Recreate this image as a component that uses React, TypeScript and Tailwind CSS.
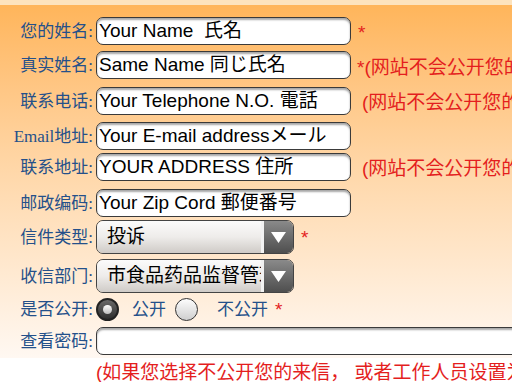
export default function App() {
  const label =
    "w-[96px] shrink-0 pr-[3px] text-right text-[17px] leading-none text-[#24508a] [font-family:'Liberation_Serif','Noto_Sans_CJK_SC',serif]";
  const input =
    "h-[28px] shrink-0 rounded-[7px] border-[1.5px] border-[#3a3a3a] bg-white pl-[2px] text-[19px] leading-[25px] text-black shadow-[inset_0_2px_2px_rgba(0,0,0,0.35)] whitespace-nowrap overflow-hidden";
  const red = "text-[19px] leading-none text-[#e41e1e] whitespace-nowrap";

  return (
    <div className="w-[512px] h-[382px] overflow-hidden bg-white [font-family:'Liberation_Sans','Noto_Sans_CJK_JP',sans-serif]">
      <div className="h-[5px] bg-[#fde3bd]" />
      <div className="h-[353px] bg-gradient-to-b from-[#ffb55a] via-[#ffd6a6] via-45% to-[#fff8f2] pt-[12px]">
        {/* 您的姓名 */}
        <div className="flex items-center h-[28px]">
          <div className={label}>您的姓名:</div>
          <div className={input + " w-[255px]"}>Your Name&nbsp; 氏名</div>
          <span className={red + " ml-[7px] mt-[2px]"}>*</span>
        </div>

        {/* 真实姓名 */}
        <div className="flex items-center h-[28px] mt-[6px]">
          <div className={label}>真实姓名:</div>
          <div className={input + " w-[255px]"}>Same Name 同じ氏名</div>
          <span className={red + " ml-[6px] mt-[4px]"}>*(网站不会公开您的真实姓名)</span>
        </div>

        {/* 联系电话 */}
        <div className="flex items-center h-[28px] mt-[8px]">
          <div className={label}>联系电话:</div>
          <div className={input + " w-[255px]"}>Your Telephone N.O. 電話</div>
          <span className={red + " ml-[11px] mt-[2px]"}>(网站不会公开您的电话)</span>
        </div>

        {/* Email地址 */}
        <div className="flex items-center h-[28px] mt-[7px]">
          <div className={label}>Email地址:</div>
          <div className={input + " w-[255px]"}>Your E-mail addressメール</div>
        </div>

        {/* 联系地址 */}
        <div className="flex items-center h-[28px] mt-[3px]">
          <div className={label}>联系地址:</div>
          <div className={input + " w-[255px]"}>YOUR ADDRESS 住所</div>
          <span className={red + " ml-[11px] mt-[2px]"}>(网站不会公开您的地址)</span>
        </div>

        {/* 邮政编码 */}
        <div className="flex items-center h-[28px] mt-[8px]">
          <div className={label}>邮政编码:</div>
          <div className={input + " w-[255px]"}>Your Zip Cord 郵便番号</div>
        </div>

        {/* 信件类型 */}
        <div className="flex items-center h-[34px] mt-[3px]">
          <div className={label}>信件类型:</div>
          <Select value="投诉" />
          <span className={red + " ml-[7px]"}>*</span>
        </div>

        {/* 收信部门 */}
        <div className="flex items-center h-[34px] mt-[5px]">
          <div className={label}>收信部门:</div>
          <Select value="市食品药品监督管理局" />
        </div>

        {/* 是否公开 */}
        <div className="flex items-center h-[23px] mt-[5px]">
          <div className={label}>是否公开:</div>
          <Radio checked />
          <span className="ml-[13px] text-[17px] leading-none text-[#24508a]">公开</span>
          <span className="ml-[9px]">
            <Radio />
          </span>
          <span className="ml-[19px] text-[17px] leading-none text-[#24508a]">不公开</span>
          <span className={red + " ml-[7px] text-[17px]"}>*</span>
        </div>

        {/* 查看密码 */}
        <div className="flex items-center h-[28px] mt-[6px]">
          <div className={label}>查看密码:</div>
          <div className={input + " w-[430px]"} />
        </div>
      </div>

      <div className={red + " pl-[96px] pt-[5px]"}>(如果您选择不公开您的来信，&nbsp;或者工作人员设置为不公开)</div>
    </div>
  );
}

function Select({ value }: { value: string }) {
  return (
    <div className="flex h-[34px] w-[198px] shrink-0 overflow-hidden rounded-[7px] border-[1.5px] border-[#444]">
      <div className="flex-1 min-w-0 overflow-hidden whitespace-nowrap bg-gradient-to-b from-[#fbfbfb] via-[#eeecea] to-[#cfcbc7] pl-[10px] text-[19px] leading-[31px] text-black border-r-[3px] border-[#f2f2f2]">
        {value}
      </div>
      <div className="flex w-[29px] shrink-0 items-center justify-center bg-gradient-to-b from-[#8a8a8a] to-[#4f4f4f]">
        <svg width="15" height="11" viewBox="0 0 15 11">
          <polygon points="0,0 15,0 7.5,11" fill="#fff" />
        </svg>
      </div>
    </div>
  );
}

function Radio({ checked = false }: { checked?: boolean }) {
  if (checked) {
    return (
      <div className="flex h-[23px] w-[23px] items-center justify-center rounded-full border-[2px] border-[#222] bg-gradient-to-b from-[#6a6a6a] to-[#2e2e2e]">
        <div className="h-[9px] w-[9px] rounded-full bg-gradient-to-b from-[#ffffff] to-[#bdbdbd]" />
      </div>
    );
  }
  return (
    <div className="h-[23px] w-[23px] rounded-full border-[1.5px] border-[#333] bg-gradient-to-b from-[#fdfdfd] to-[#cfcfcf]" />
  );
}
